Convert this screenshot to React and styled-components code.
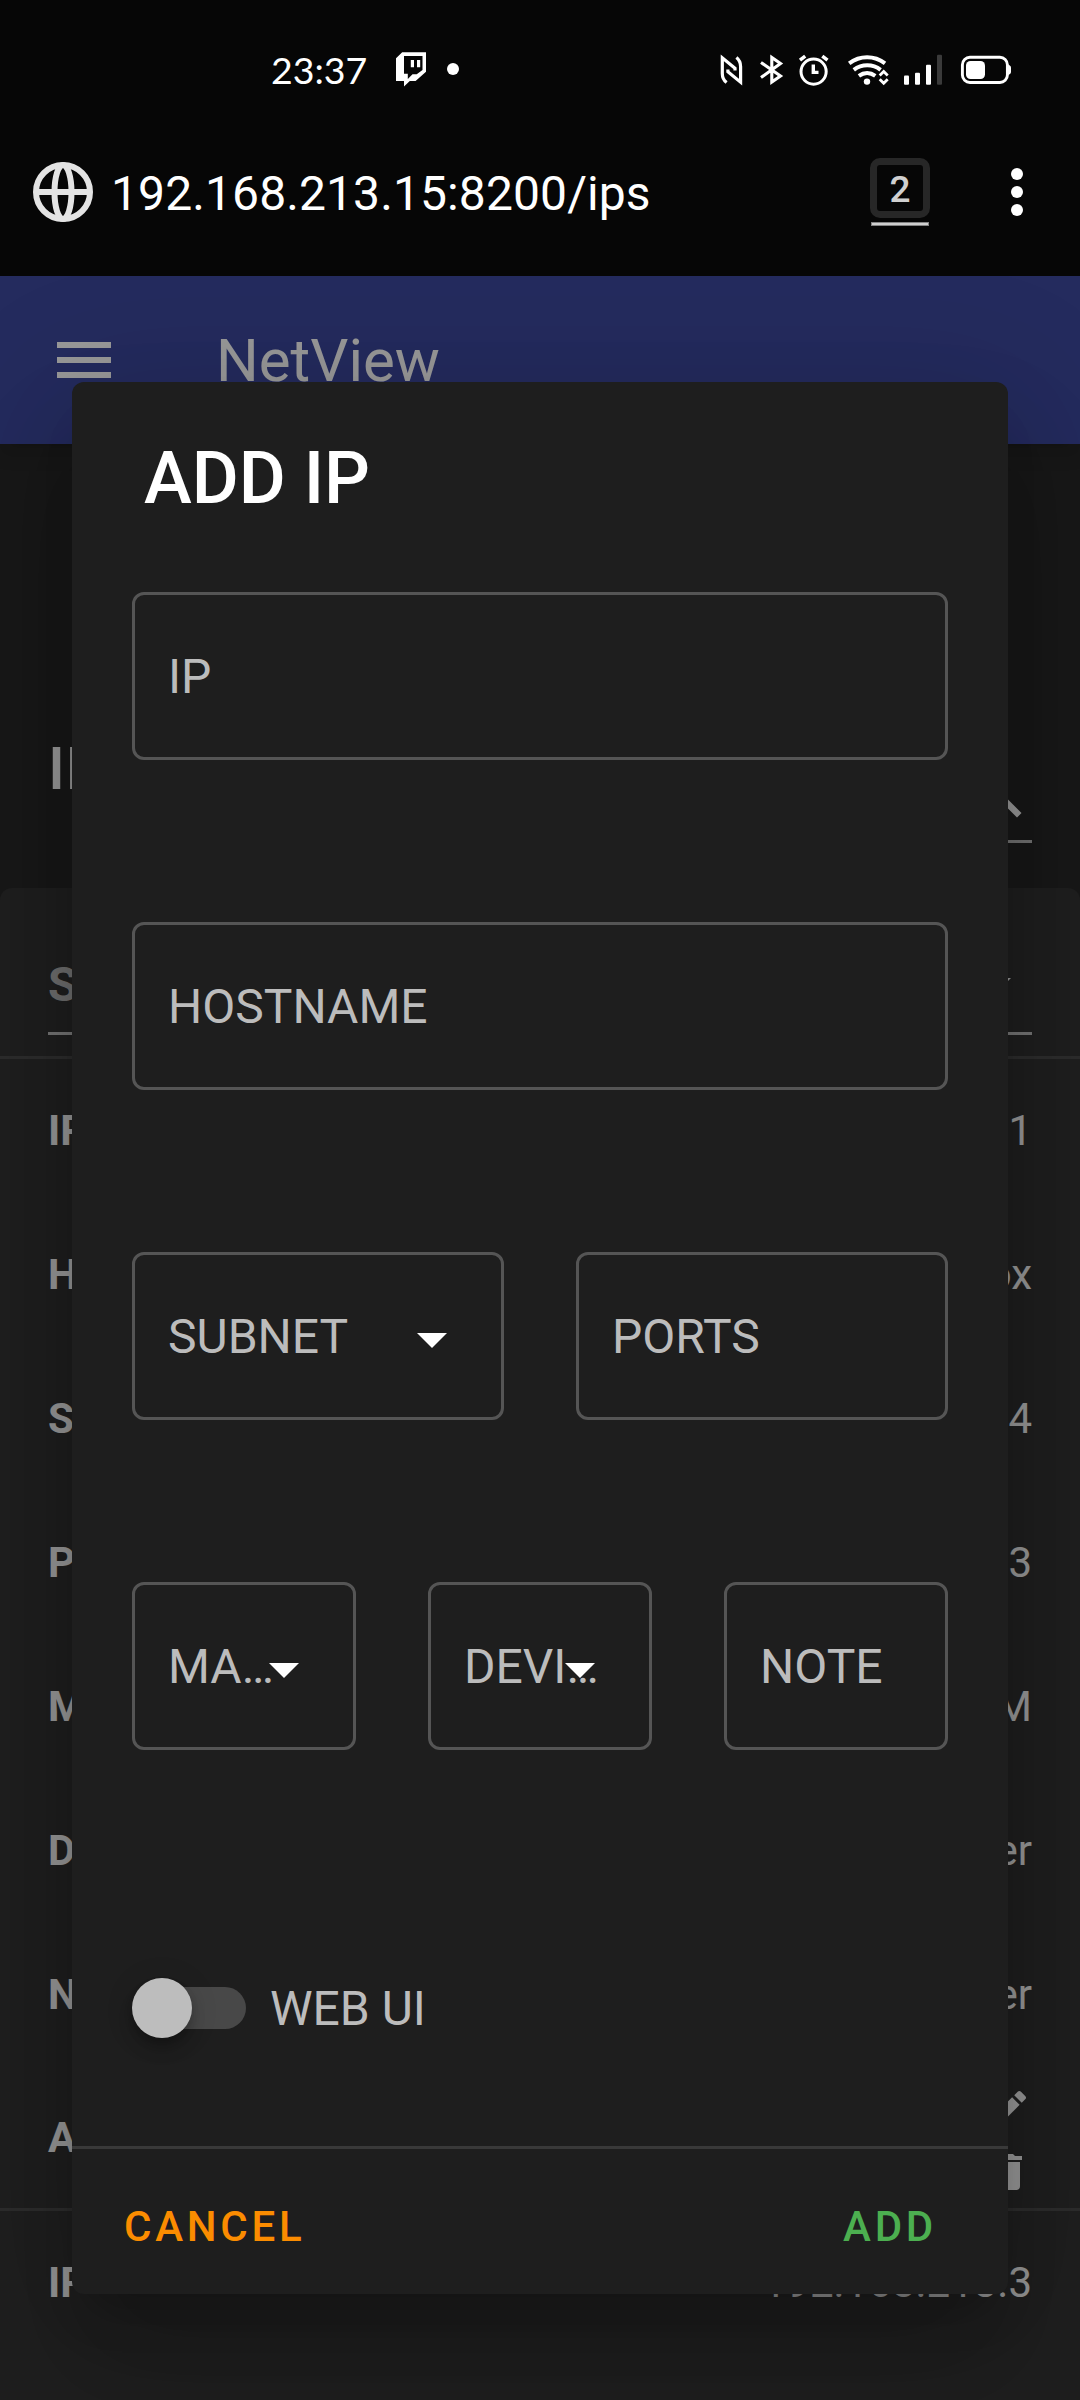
import React from "react";
import styled, { createGlobalStyle } from "styled-components";

const GlobalStyle = createGlobalStyle`
  *, *::before, *::after { box-sizing: border-box; }
  html, body { margin: 0; background: #121212; }
  body { font-family: Roboto, "Liberation Sans", sans-serif; }
  svg { display: block; flex: none; }
`;

const Screen = styled.div`
  display: flex;
  flex-direction: column;
  width: 1080px;
  height: 2400px;
  overflow: hidden;
`;

/* ---------- Phone chrome ---------- */

const Chrome = styled.header`
  display: flex;
  flex-direction: column;
  height: 276px;
  flex: none;
  background: #060606;
  color: #fff;
`;

const StatusBar = styled.div`
  display: flex;
  align-items: center;
  justify-content: space-between;
  height: 138px;
  padding: 0 69px 0 270px;
`;

const StatusSide = styled.div`
  display: flex;
  align-items: center;
`;

const Clock = styled.time`
  width: 126px;
  font-family: Lato, Roboto, sans-serif;
  font-size: 37.5px;
  line-height: 48px;
  letter-spacing: 0;
  padding: 2px 0 0 1px;
`;

const Dot = styled.span`
  width: 12px;
  height: 12px;
  border-radius: 50%;
  background: ${(p) => p.$color || "#fff"};
`;

const StatusDot = styled(Dot)`
  margin-left: 21px;
`;

const AddressBar = styled.div`
  display: flex;
  align-items: center;
  height: 108px;
  padding: 0 57px 0 33px;
`;

const Url = styled.span`
  flex: 1;
  padding: 3px 0 0 18px;
  font-size: 48px;
  line-height: 60px;
  letter-spacing: 0.1px;
`;

const TabSwitcher = styled.div`
  display: flex;
  flex-direction: column;
  align-items: center;
  gap: 4px;
  margin: 0 81px 0 0;
`;

const TabCount = styled.span`
  display: flex;
  align-items: center;
  justify-content: center;
  width: 60px;
  height: 60px;
  border: 7px solid #272727;
  border-radius: 10px;
  color: #d0d0d0;
  font-size: 37px;
  font-weight: 500;
  line-height: 44px;
  padding-top: 3px;
`;

const TabUnderline = styled.span`
  width: 58px;
  height: 4px;
  border: 1px solid #828282;
  background: #cfcfcf;
`;

const MenuDots = styled.div`
  display: flex;
  flex-direction: column;
  gap: 6px;
`;

/* ---------- Page under the dialog ---------- */

const Page = styled.main`
  position: relative;
  display: flex;
  flex-direction: column;
  height: 2124px;
  overflow: hidden;
  background: #121212;
  color: #fff;
`;

const Toolbar = styled.div`
  position: relative;
  display: flex;
  align-items: center;
  gap: 96px;
  height: 168px;
  flex: none;
  padding: 0 48px;
  background: #283593;
  box-shadow: 0 6px 12px -3px rgba(0, 0, 0, 0.2), 0 12px 15px rgba(0, 0, 0, 0.14),
    0 3px 30px rgba(0, 0, 0, 0.12);
`;

const ToolbarTitle = styled.span`
  padding-top: 1px;
  font-size: 60px;
  line-height: 90px;
`;

const TableHeading = styled.div`
  display: flex;
  justify-content: space-between;
  height: 444px;
  flex: none;
  padding: 0 48px;
`;

const Heading = styled.h2`
  margin: 0;
  padding-top: 277px;
  font-size: 60px;
  font-weight: 500;
  line-height: 96px;
  letter-spacing: 0.75px;
`;

const SearchField = styled.div`
  display: flex;
  justify-content: flex-end;
  align-self: flex-start;
  width: 492px;
  height: 87px;
  margin-top: 312px;
  border-bottom: 3px solid rgba(255, 255, 255, 0.7);
`;

const TableCard = styled.section`
  display: flex;
  flex-direction: column;
  flex: 1;
  overflow: hidden;
  border-radius: 12px 12px 0 0;
  background: #1e1e1e;
`;

const SortHeader = styled.div`
  height: 171px;
  flex: none;
  padding: 60px 48px 0;
  border-bottom: 3px solid rgba(255, 255, 255, 0.12);
`;

const SortField = styled.div`
  display: flex;
  justify-content: space-between;
  height: 87px;
  border-bottom: 3px solid rgba(255, 255, 255, 0.7);
  color: rgba(255, 255, 255, 0.68);
  font-size: 48px;
  font-weight: 700;
  line-height: 74px;
`;

const Row = styled.div`
  display: flex;
  align-items: center;
  justify-content: space-between;
  height: 144px;
  flex: none;
  padding: 0 48px;
  font-size: 42px;
  line-height: 60px;
  border-bottom: ${(p) => (p.$last ? "3px solid rgba(255, 255, 255, 0.12)" : "0")};
`;

const Key = styled.span`
  font-weight: 700;
`;

const RowActions = styled.div`
  display: flex;
  flex-direction: column;
  gap: 15px;
  padding-top: 6px;
`;

/* ---------- Dialog ---------- */

const Scrim = styled.div`
  position: absolute;
  inset: 0;
  display: flex;
  align-items: center;
  justify-content: center;
  background: rgba(33, 33, 33, 0.46);
`;

const Dialog = styled.div`
  display: flex;
  flex-direction: column;
  width: 936px;
  border-radius: 12px;
  overflow: hidden;
  background: #1e1e1e;
  box-shadow: 0 33px 45px -21px rgba(0, 0, 0, 0.2), 0 72px 114px 9px rgba(0, 0, 0, 0.14),
    0 27px 138px 24px rgba(0, 0, 0, 0.12);
`;

const DialogTitle = styled.h1`
  margin: 0;
  padding: 49px 72px 29px;
  font-size: 72px;
  font-weight: 500;
  line-height: 96px;
`;

const Form = styled.div`
  display: flex;
  flex-direction: column;
  gap: 162px;
  padding: 36px 60px 108px;
`;

const FieldRow = styled.div`
  display: flex;
  gap: 72px;
`;

const FieldBox = styled.div`
  position: relative;
  display: flex;
  align-items: center;
  flex: 1 1 0;
  min-width: 0;
  height: 168px;
  padding: 2px 33px 0;
  border: 3px solid #555;
  border-radius: 12px;
`;

const FieldLabel = styled.span`
  max-width: ${(p) => (p.$select ? "90%" : "100%")};
  overflow: hidden;
  text-overflow: ellipsis;
  white-space: nowrap;
  color: #bcbcbc;
  font-size: 48px;
  line-height: 60px;
`;

const FieldArrow = styled.span`
  position: absolute;
  top: 48px;
  right: 33px;
`;

const SwitchRow = styled.div`
  display: flex;
  align-items: center;
  height: 60px;
  margin-top: 66px;
`;

const SwitchTrack = styled.span`
  display: flex;
  align-items: center;
  width: 108px;
  height: 42px;
  margin-left: 6px;
  border-radius: 24px;
  background: #484848;
`;

const SwitchThumb = styled.span`
  flex: none;
  width: 60px;
  height: 60px;
  margin-left: -6px;
  border-radius: 50%;
  background: #bdbdbd;
  box-shadow: 0 6px 12px -3px rgba(0, 0, 0, 0.2), 0 12px 15px rgba(0, 0, 0, 0.14),
    0 3px 30px rgba(0, 0, 0, 0.12);
`;

const SwitchLabel = styled.span`
  margin-left: 24px;
  padding-top: 2px;
  color: #bcbcbc;
  font-size: 48px;
  line-height: 60px;
`;

const DialogActions = styled.div`
  display: flex;
  align-items: center;
  justify-content: space-between;
  height: 148px;
  padding: 10px 71px 0 52px;
  border-top: 3px solid #393939;
`;

const TextButton = styled.button`
  padding: 0;
  border: 0;
  background: none;
  color: ${(p) => p.$color};
  font-family: inherit;
  font-size: 42px;
  font-weight: 500;
  line-height: 60px;
  letter-spacing: 3.75px;
`;

/* ---------- Icons ---------- */

const TwitchIcon = () => (
  <svg width="30" height="35" viewBox="0 0 30 35" fill="#fff">
    <path
      fillRule="evenodd"
      d="M6.2.3H30v19.4L19.6 29h-5.800L8 34.600V29H0V6.300zM8 4v17.700h3.800V27l4.700-4.700h4.200l5.800-4.300V4z"
    />
    <path d="M14.800 8H18v7.300h-3.200zM21 8h3.200v7.300H21z" />
  </svg>
);

const StatusIcons = () => (
  <svg width="291" height="33" viewBox="0 0 291 33" fill="none" stroke="#fff">
    {/* NFC */}
    <path d="M6.600 29.600C3.200 27 2.300 24.400 2.300 20.500V4.800L15 15.200v2.300" strokeWidth="3.2" />
    <path d="M16.400 4.400c3.300 2.600 4.200 5.200 4.200 9.100v15.700L7.900 18.800v-2.400" strokeWidth="3.2" />
    {/* Bluetooth */}
    <path d="m41 9.500 19.500 13.400L51.800 29V4.500l8.700 6L41 24.600" strokeWidth="3.1" />
    {/* Alarm */}
    <circle cx="93.600" cy="18.600" r="12.600" strokeWidth="3" />
    <path d="M93.300 11.500v7.900h5.200" strokeWidth="3.4" />
    <path d="m80 7.200 5.200-4M107.500 7.200l-5.200-4" strokeWidth="3.500" />
    {/* Wi-Fi */}
    <path d="M129.200 10.300c10.800-8.100 25-8.100 35.800 0M133.800 16.800c8-6 19-6 26.800 0M138.900 22.800c5-3.600 11.400-3.600 16.400 0" strokeWidth="4" />
    <circle cx="147" cy="28.600" r="3.200" fill="#fff" stroke="none" />
    <path d="m159.700 22.500 4-4 4 4M159.700 26.300l4 4 4-4" strokeWidth="2.800" />
    {/* Signal */}
    <g stroke="none" fill="#fff">
      <rect x="184" y="22.600" width="5" height="9.200" rx="1" />
      <rect x="195" y="19.700" width="5" height="12.100" rx="1" />
      <rect x="206" y="11.700" width="5" height="20.100" rx="1" />
      <rect x="217" y="1.800" width="5" height="30" rx="1" fill="#3a3a3a" />
    </g>
    {/* Battery */}
    <rect x="242.400" y="4.300" width="45" height="25.200" rx="7.500" strokeWidth="2.900" />
    <rect x="246" y="8" width="19" height="18" rx="4.500" fill="#fff" stroke="none" />
    <path d="M288 11.500c1.500.6 3 1.800 3 3v4.500c0 1.500-1.500 2.500-3 3z" fill="#fff" stroke="none" />
  </svg>
);

const GlobeIcon = () => (
  <svg width="60" height="60" viewBox="0 0 60 60" fill="none" stroke="#e3e3e3" strokeWidth="6">
    <circle cx="30" cy="30" r="27" />
    <ellipse cx="30" cy="30" rx="8.500" ry="27" />
    <path d="M3 30h54" />
  </svg>
);

const paths = {
  menu: "M3 6h18v2H3V6m0 5h18v2H3v-2m0 5h18v2H3v-2z",
  menuDown: "M7 10l5 5 5-5H7z",
  magnify:
    "M9.5 3A6.5 6.5 0 0 1 16 9.5c0 1.610-.59 3.090-1.560 4.230l.27.27h.79l5 5-1.500 1.500-5-5v-.79l-.27-.27A6.516 6.516 0 0 1 9.500 16 6.500 6.500 0 0 1 3 9.500 6.500 6.500 0 0 1 9.500 3m0 2C7 5 5 7 5 9.500S7 14 9.500 14 14 12 14 9.500 12 5 9.500 5z",
  pencil:
    "M20.710 7.040c.39-.39.39-1.040 0-1.410l-2.340-2.340c-.37-.39-1.020-.39-1.410 0l-1.840 1.830 3.750 3.750M3 17.250V21h3.750L17.810 9.930l-3.750-3.750L3 17.250z",
  delete: "M19 4h-3.500l-1-1h-5l-1 1H5v2h14M6 19a2 2 0 0 0 2 2h8a2 2 0 0 0 2-2V7H6v12z",
};

const Icon = ({ name, size = 72 }) => (
  <svg width={size} height={size} viewBox="0 0 24 24" fill="#fff">
    <path d={paths[name]} />
  </svg>
);

const Field = ({ label, select }) => (
  <FieldBox>
    <FieldLabel $select={select}>{label}</FieldLabel>
    {select && (
      <FieldArrow>
        <Icon name="menuDown" />
      </FieldArrow>
    )}
  </FieldBox>
);

const details = [
  ["IP", "192.168.213.1"],
  ["Hostname", "fritz.box"],
  ["Subnet", "/24"],
  ["Ports", "53"],
  ["Manufacturer", "AVM"],
  ["Device", "Router"],
  ["Note", "Router"],
];

export default function App() {
  return (
    <Screen>
      <GlobalStyle />
      <Chrome>
        <StatusBar>
          <StatusSide>
            <Clock>23:37</Clock>
            <TwitchIcon />
            <StatusDot />
          </StatusSide>
          <StatusIcons />
        </StatusBar>
        <AddressBar>
          <GlobeIcon />
          <Url>192.168.213.15:8200/ips</Url>
          <TabSwitcher>
            <TabCount>2</TabCount>
            <TabUnderline />
          </TabSwitcher>
          <MenuDots>
            <Dot />
            <Dot />
            <Dot />
          </MenuDots>
        </AddressBar>
      </Chrome>

      <Page>
        <Toolbar>
          <Icon name="menu" />
          <ToolbarTitle>NetView</ToolbarTitle>
        </Toolbar>
        <TableHeading>
          <Heading>IPs</Heading>
          <SearchField>
            <Icon name="magnify" />
          </SearchField>
        </TableHeading>
        <TableCard>
          <SortHeader>
            <SortField>
              Sort by
              <Icon name="menuDown" />
            </SortField>
          </SortHeader>
          {details.map(([key, value]) => (
            <Row key={key}>
              <Key>{key}</Key>
              <span>{value}</span>
            </Row>
          ))}
          <Row $last>
            <Key>Actions</Key>
            <RowActions>
              <Icon name="pencil" size={48} />
              <Icon name="delete" size={48} />
            </RowActions>
          </Row>
          <Row>
            <Key>IP</Key>
            <span>192.168.213.3</span>
          </Row>
        </TableCard>

        <Scrim>
          <Dialog>
            <DialogTitle>ADD IP</DialogTitle>
            <Form>
              <FieldRow>
                <Field label="IP" />
              </FieldRow>
              <FieldRow>
                <Field label="HOSTNAME" />
              </FieldRow>
              <FieldRow>
                <Field label="SUBNET" select />
                <Field label="PORTS" />
              </FieldRow>
              <FieldRow>
                <Field label="MANUFACTURER" select />
                <Field label="DEVICE" select />
                <Field label="NOTE" />
              </FieldRow>
              <SwitchRow>
                <SwitchTrack>
                  <SwitchThumb />
                </SwitchTrack>
                <SwitchLabel>WEB UI</SwitchLabel>
              </SwitchRow>
            </Form>
            <DialogActions>
              <TextButton $color="#fb8c00">CANCEL</TextButton>
              <TextButton $color="#4caf50">ADD</TextButton>
            </DialogActions>
          </Dialog>
        </Scrim>
      </Page>
    </Screen>
  );
}
